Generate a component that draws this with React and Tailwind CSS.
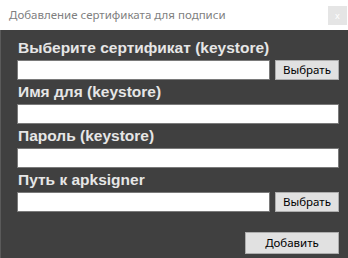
const Field = ({ label, button }) => (
  <div className="flex flex-col">
    <div className="h-[24px] flex items-end pb-[5px] pl-[1px] text-[15.5px] font-bold leading-none text-[#e6e6e6]">
      {label}
    </div>
    <div className="flex items-center gap-[5px]">
      <div className="h-[20px] flex-1 bg-white border border-[#7a7a7a]" />
      {button && (
        <button className="h-[20px] w-[64px] bg-[#e1e1e1] border border-[#adadad] text-[11.5px] leading-none text-black font-['Noto_Sans',sans-serif]">
          {button}
        </button>
      )}
    </div>
  </div>
);

export default function App() {
  return (
    <div className="w-[348px] h-[258px] flex flex-col bg-[#404040] font-['Liberation_Sans',Arial,sans-serif]">
      <div className="h-[30px] bg-white flex items-center justify-between pl-[9px] pr-[1px]">
        <span className="text-[11.5px] text-[#808080] font-['Noto_Sans',sans-serif]">
          Добавление сертификата для подписи
        </span>
        <div className="w-[19px] h-[19px] bg-[#e5e5e5] flex items-center justify-center text-[9px] leading-none text-white font-['Noto_Sans',sans-serif]">
          x
        </div>
      </div>
      <div className="flex-1 flex flex-col pl-[16px] pr-[9px] border-l border-[#5a5a5a]">
        <div className="mt-[6px]" />
        <Field label="Выберите сертификат (keystore)" button="Выбрать" />
        <Field label="Имя для (keystore)" />
        <Field label="Пароль (keystore)" />
        <Field label="Путь к apksigner" button="Выбрать" />
        <div className="flex justify-end mt-[20px]">
          <button className="h-[22px] w-[94px] bg-[#e1e1e1] border border-[#adadad] text-[11.5px] leading-none text-black font-['Noto_Sans',sans-serif]">
            Добавить
          </button>
        </div>
      </div>
    </div>
  );
}
